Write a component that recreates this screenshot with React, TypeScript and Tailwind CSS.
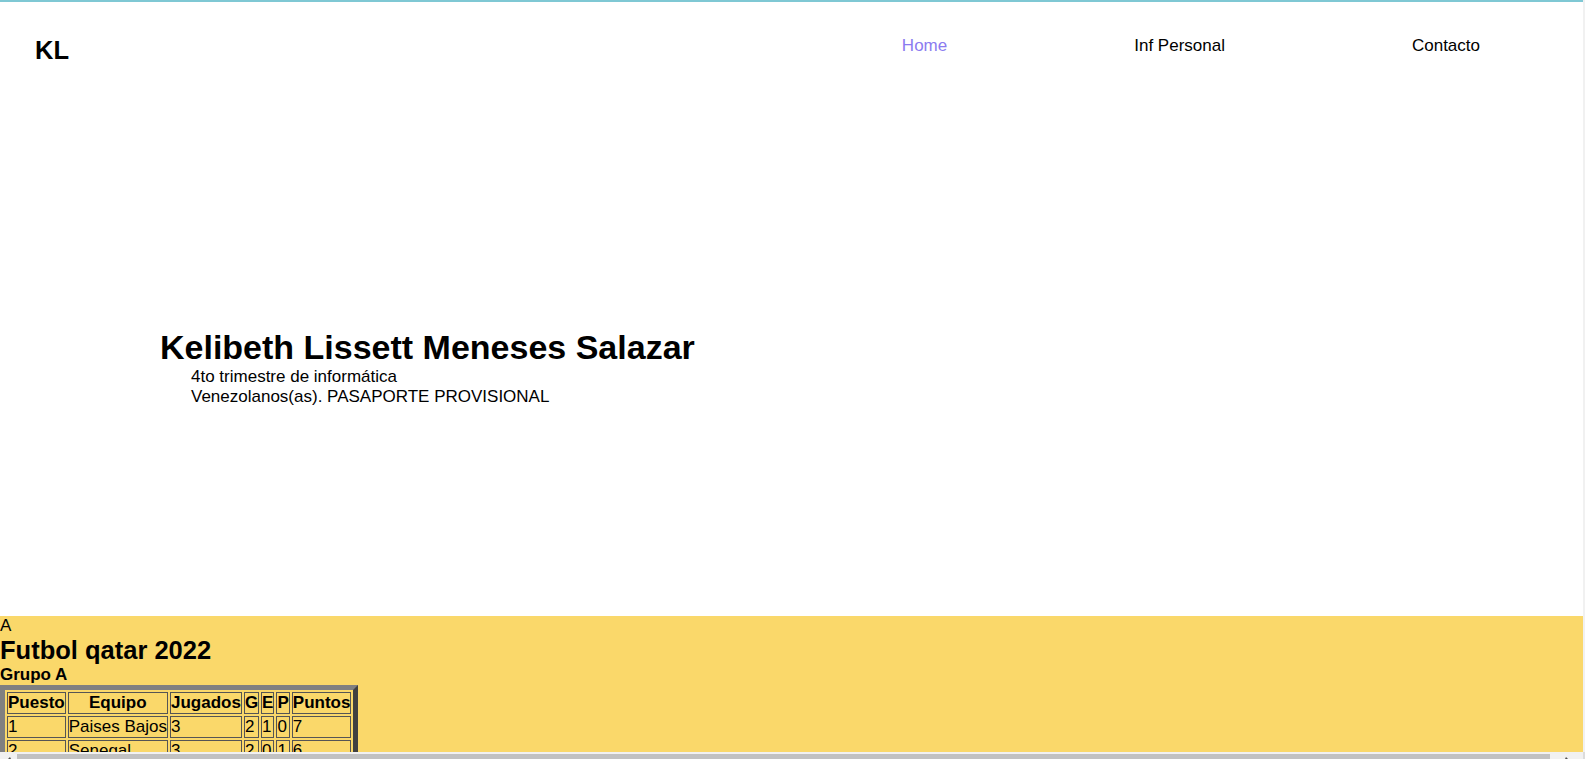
import React from "react";

const rows: string[][] = [
  ["1", "Paises Bajos", "3", "2", "1", "0", "7"],
  ["2", "Senegal", "3", "2", "0", "1", "6"],
  ["3", "Ecuador", "3", "1", "1", "1", "4"],
  ["4", "Qatar", "3", "0", "0", "3", "0"],
];

const heads = ["Puesto", "Equipo", "Jugados", "G", "E", "P", "Puntos"];

export default function App() {
  return (
    <div className="w-[1585px] h-[759px] overflow-hidden flex flex-col bg-white font-['Liberation_Sans',Arial,sans-serif] text-[17px] leading-[normal] text-black">
      <div className="flex flex-1 min-h-0">
        <div className="flex-1 min-w-0 overflow-hidden flex flex-col">
          <div className="h-[2px] shrink-0 bg-[#7fc8d4]" />
          <header className="h-[88px] shrink-0 flex items-start justify-between pl-[35px] pr-[103px] pt-[33px]">
            <div className="text-[25.5px] font-bold leading-[30px]">KL</div>
            <nav className="flex gap-[187px] mt-[1px]">
              <a className="text-[#8b7bf0]">Home</a>
              <a>Inf Personal</a>
              <a>Contacto</a>
            </nav>
          </header>
          <section className="h-[526px] shrink-0 pl-[160px] pt-[238px]">
            <h1 className="text-[34px] font-bold">Kelibeth Lissett Meneses Salazar</h1>
            <p className="ml-[31px]">4to trimestre de informática</p>
            <p className="ml-[31px]">Venezolanos(as). PASAPORTE PROVISIONAL</p>
          </section>
          <section className="flex-1 bg-[#fad86a]">
            <div>A</div>
            <h2 className="text-[25.5px] font-bold">Futbol qatar 2022</h2>
            <div className="font-bold">Grupo A</div>
            <table className="border-separate border-spacing-[2px] border-[5px] border-t-[#808080] border-l-[#808080] border-r-[#404040] border-b-[#404040]">
              <thead>
                <tr>
                  {heads.map((h) => (
                    <th key={h} className="border border-[#555] p-0 font-bold text-center">
                      {h}
                    </th>
                  ))}
                </tr>
              </thead>
              <tbody>
                {rows.map((r) => (
                  <tr key={r[0]}>
                    {r.map((c, i) => (
                      <td key={i} className="border border-[#555] p-0 text-left">
                        {c}
                      </td>
                    ))}
                  </tr>
                ))}
              </tbody>
            </table>
          </section>
        </div>
        <div className="w-[2px] shrink-0 bg-[#f1f1f1]" />
      </div>
      <div className="h-[7px] shrink-0 flex bg-[#f1f1f1]">
        <div className="w-[17px] shrink-0 flex justify-center pt-[5px]">
          <svg width="6" height="4" viewBox="0 0 6 4">
            <path d="M4 0 L0 4 L6 4 Z" fill="#505050" />
          </svg>
        </div>
        <div className="w-[1533px] shrink-0 mt-[2px] bg-[#c1c1c1]" />
        <div className="flex-1 flex justify-center pt-[5px]">
          <svg width="6" height="4" viewBox="0 0 6 4">
            <path d="M2 0 L6 4 L0 4 Z" fill="#505050" />
          </svg>
        </div>
        <div className="w-[2px] shrink-0 bg-[#dcdcdc]" />
      </div>
    </div>
  );
}
